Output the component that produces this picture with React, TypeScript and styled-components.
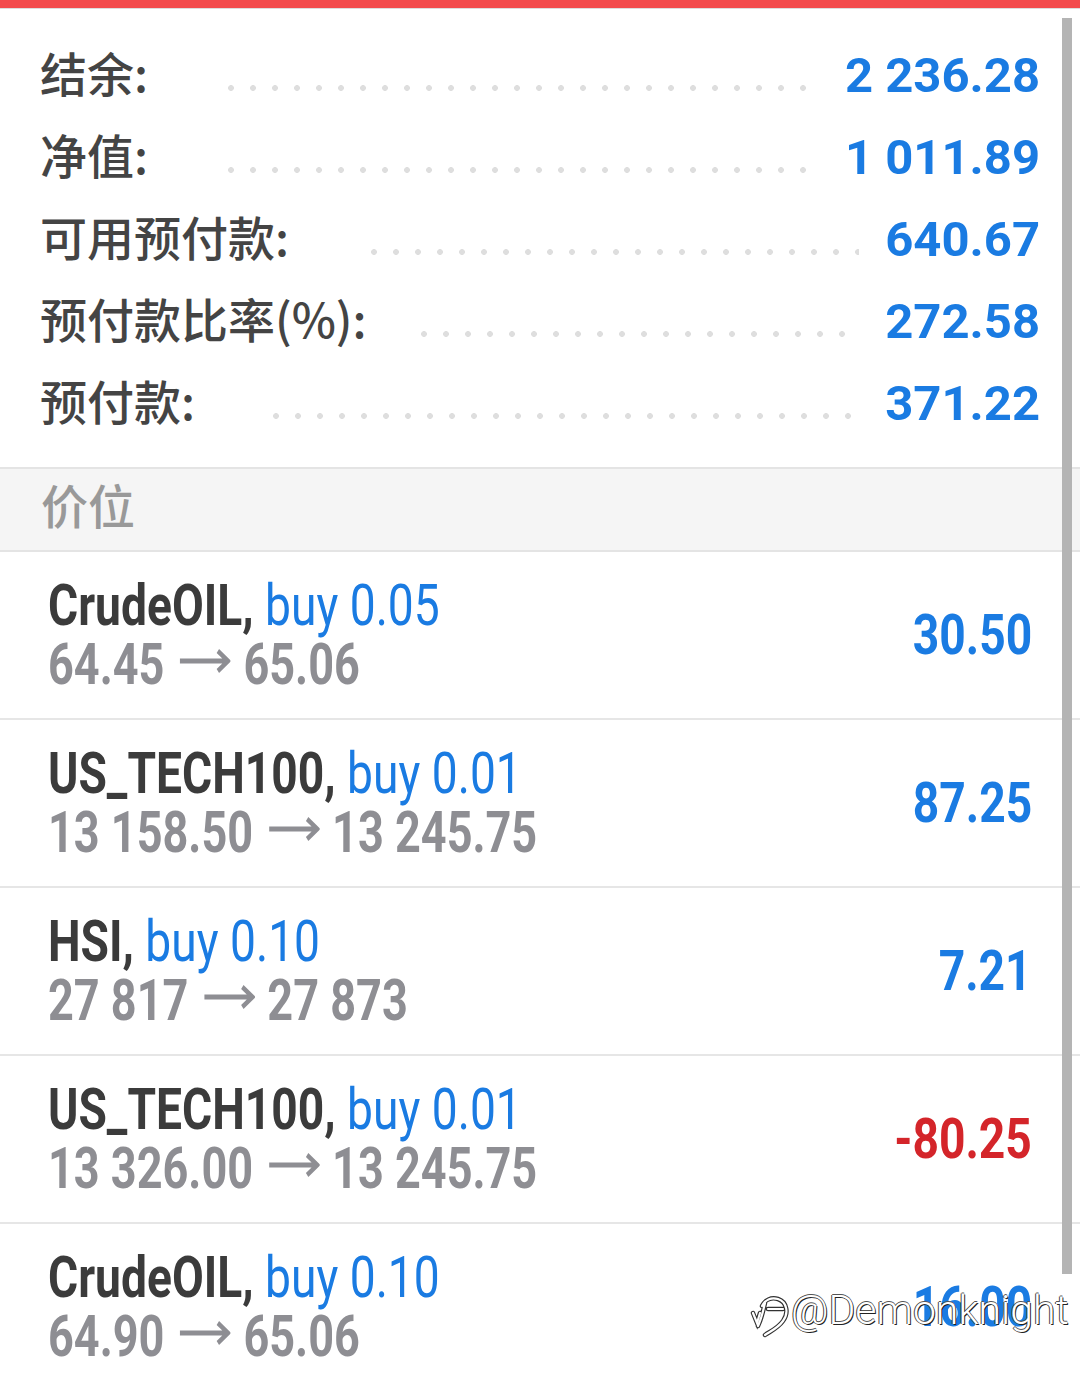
import styled, { createGlobalStyle } from "styled-components";

const GlobalStyle = createGlobalStyle`
  html, body {
    margin: 0;
    padding: 0;
    background: #fff;
    overflow: hidden;
  }
  body {
    font-family: Roboto, "Noto Sans CJK SC", sans-serif;
  }
`;

type Summary = { label: string; value: string; lead: number };

const summary: Summary[] = [
  { label: "结余:", value: "2 236.28", lead: 72 },
  { label: "净值:", value: "1 011.89", lead: 72 },
  { label: "可用预付款:", value: "640.67", lead: 74 },
  { label: "预付款比率(%):", value: "272.58", lead: 46 },
  { label: "预付款:", value: "371.22", lead: 70 },
];

type Position = {
  symbol: string;
  side: string;
  from: string;
  to: string;
  profit: string;
};

const positions: Position[] = [
  { symbol: "CrudeOIL,", side: "buy 0.05", from: "64.45", to: "65.06", profit: "30.50" },
  { symbol: "US_TECH100,", side: "buy 0.01", from: "13 158.50", to: "13 245.75", profit: "87.25" },
  { symbol: "HSI,", side: "buy 0.10", from: "27 817", to: "27 873", profit: "7.21" },
  { symbol: "US_TECH100,", side: "buy 0.01", from: "13 326.00", to: "13 245.75", profit: "-80.25" },
  { symbol: "CrudeOIL,", side: "buy 0.10", from: "64.90", to: "65.06", profit: "16.00" },
];

const Arrow = () => (
  <ArrowSvg viewBox="0 0 66 24" fill="none">
    <path d="M2 12 H62 M50 2 L63 12 L50 22" stroke="#8e8e93" strokeWidth="5" strokeLinejoin="miter" />
  </ArrowSvg>
);

const logoPath =
  "M8 33 L12 43 L15 33 M20 23 C18 32 16 40 13 46 M17 26 C20 20 26 17 33 19 C42 22 44 33 38 41 C33 48 26 51 20 55 M23 29 H38";

const App = () => {
  return (
    <Page>
      <GlobalStyle />
      <TopBar />
      <SummaryList>
        {summary.map((s) => (
          <SummaryRow key={s.label}>
            <Label>{s.label}</Label>
            <Leader $lead={s.lead} />
            <Amount>{s.value}</Amount>
          </SummaryRow>
        ))}
      </SummaryList>
      <SectionHeader>
        <span>价位</span>
      </SectionHeader>
      {positions.map((p, i) => (
        <PositionRow key={i}>
          <Deal>
            <Condensed $origin="left" $scale={0.81}>
              <Symbol>{p.symbol}</Symbol> <Side>{p.side}</Side>
            </Condensed>
            <Condensed $origin="left" $scale={0.79}>
              <Prices>
                {p.from}
                <Arrow />
                {p.to}
              </Prices>
            </Condensed>
          </Deal>
          <Condensed $origin="right" $scale={0.84}>
            <Profit $negative={p.profit.startsWith("-")}>{p.profit}</Profit>
          </Condensed>
        </PositionRow>
      ))}
      <ScrollThumb />
      <Watermark>
        <svg width="50" height="60" viewBox="0 0 50 60" fill="none">
          <path d={logoPath} stroke="#333" strokeWidth="4.5" strokeLinecap="round" />
          <path d={logoPath} stroke="#fff" strokeWidth="2.2" strokeLinecap="round" />
        </svg>
        <WatermarkText>@Demonknight</WatermarkText>
      </Watermark>
    </Page>
  );
};

export default App;

const Page = styled.div`
  position: relative;
  width: 1080px;
  height: 1373px;
  overflow: hidden;
  background: #fff;
`;

const TopBar = styled.div`
  height: 8px;
  background: #f34a4c;
  border-bottom: 1px solid #dcdcdc;
`;

const SummaryList = styled.div`
  padding: 25px 40px 0 40px;
`;

const SummaryRow = styled.div`
  display: flex;
  align-items: center;
  height: 82px;
`;

const Label = styled.span`
  font-family: "Noto Sans CJK SC", sans-serif;
  font-size: 47px;
  font-weight: 500;
  color: #444;
  white-space: nowrap;
  padding-bottom: 8px;
`;

const Leader = styled.span<{ $lead: number }>`
  flex: 1;
  height: 6px;
  margin: 26px 26px 0 ${(p) => p.$lead}px;
  background: radial-gradient(circle, #dedede 2.6px, transparent 3.2px) repeat-x;
  background-size: 22px 6px;
`;

const Amount = styled.span`
  font-family: Roboto, sans-serif;
  font-size: 49px;
  font-weight: 700;
  color: #1a7be2;
  white-space: nowrap;
`;

const SectionHeader = styled.div`
  margin-top: 23px;
  height: 81px;
  display: flex;
  align-items: center;
  padding-left: 41px;
  background: #f5f5f5;
  border-top: 2px solid #e4e4e4;
  border-bottom: 2px solid #e4e4e4;
  font-family: "Noto Sans CJK SC", sans-serif;
  font-size: 47px;
  font-weight: 500;
  color: #999;

  span {
    padding-bottom: 12px;
  }
`;

const PositionRow = styled.div`
  display: flex;
  align-items: center;
  justify-content: space-between;
  height: 166px;
  padding: 0 48px;
  border-bottom: 2px solid #e6e6e6;
`;

const Deal = styled.div`
  display: flex;
  flex-direction: column;
`;

const Condensed = styled.span<{ $origin: "left" | "right"; $scale: number }>`
  display: block;
  white-space: nowrap;
  transform: scaleX(${(p) => p.$scale});
  transform-origin: ${(p) => p.$origin} center;
  font-family: Roboto, sans-serif;
  font-size: 57px;
  line-height: 59px;
`;

const Symbol = styled.span`
  font-weight: 700;
  color: #3b3b3b;
`;

const Side = styled.span`
  font-weight: 400;
  color: #1a7be2;
`;

const Prices = styled.span`
  font-weight: 700;
  color: #8e8e93;
`;

const ArrowSvg = styled.svg`
  display: inline-block;
  width: 66px;
  height: 24px;
  margin: 0 16px 0 18px;
  vertical-align: 0.2em;
`;

const Profit = styled.span<{ $negative: boolean }>`
  font-size: 55px;
  font-weight: 700;
  color: ${(p) => (p.$negative ? "#d4252a" : "#1a7be2")};
`;

const ScrollThumb = styled.div`
  position: absolute;
  left: 1062px;
  top: 18px;
  width: 10px;
  height: 1256px;
  background: #b4b4b4;
`;

const Watermark = styled.div`
  position: absolute;
  left: 745px;
  top: 1280px;
  display: flex;
  align-items: center;
`;

const WatermarkText = styled.span`
  font-family: Roboto, sans-serif;
  font-size: 41px;
  font-weight: 300;
  color: #fff;
  margin-left: -4px;
  margin-top: 0;
  text-shadow: 1px 1px 0 #222, -1px 0 0 #444, 0 -1px 0 #555;
  white-space: nowrap;
`;
